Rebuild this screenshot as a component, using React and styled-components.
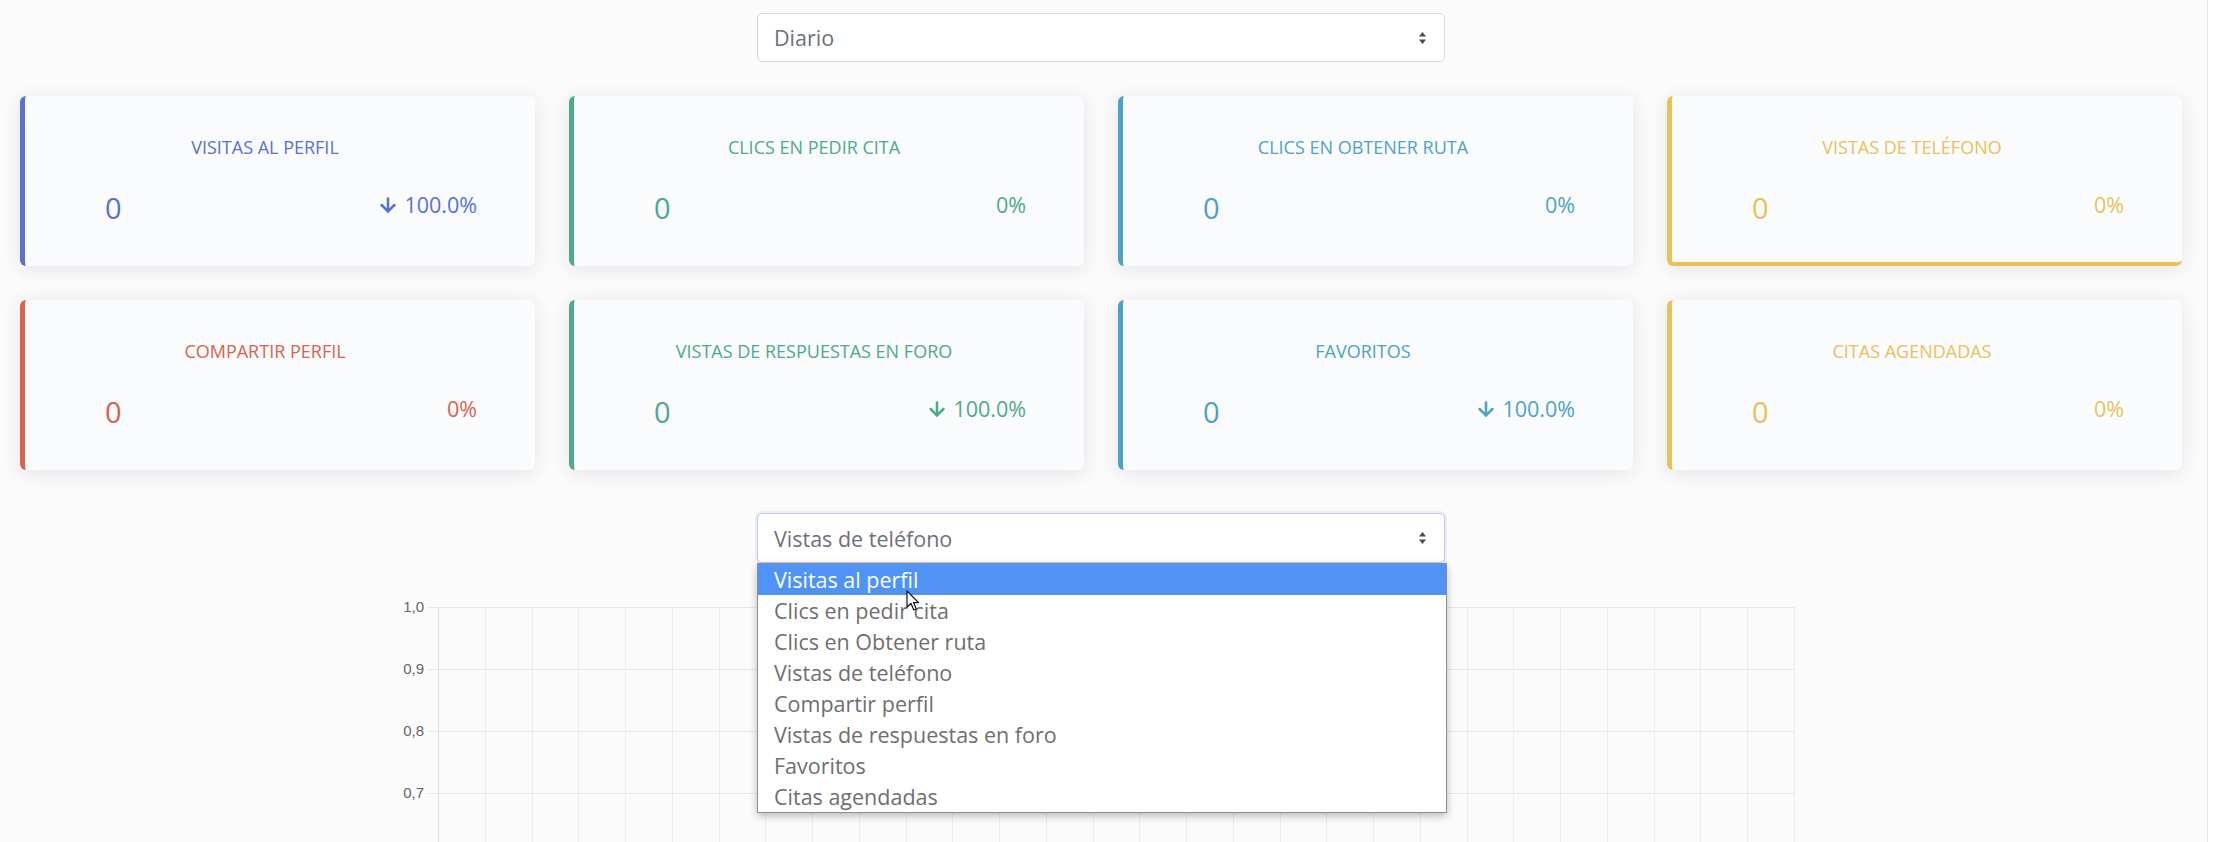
import React from "react";
import styled, { createGlobalStyle } from "styled-components";
import { ArrowDown } from "lucide-react";

const GlobalStyle = createGlobalStyle`
  html, body {
    margin: 0;
    padding: 0;
    background: #ffffff;
    font-family: "Open Sans", "Liberation Sans", sans-serif;
  }
`;

// colores de cada tarjeta
const colors = {
  primary: "#5872d2",
  success: "#4daa8a",
  info: "#4ba4c2",
  warning: "#e9c257",
  danger: "#d6644f",
};

const cards = [
  { title: "Visitas al perfil", value: 0, pct: "100.0%", down: true, color: "primary" },
  { title: "Clics en pedir cita", value: 0, pct: "0%", color: "success" },
  { title: "Clics en obtener ruta", value: 0, pct: "0%", color: "info" },
  { title: "Vistas de teléfono", value: 0, pct: "0%", color: "warning", active: true },
  { title: "Compartir perfil", value: 0, pct: "0%", color: "danger" },
  { title: "Vistas de respuestas en foro", value: 0, pct: "100.0%", down: true, color: "success" },
  { title: "Favoritos", value: 0, pct: "100.0%", down: true, color: "info" },
  { title: "Citas agendadas", value: 0, pct: "0%", color: "warning" },
];

const options = [
  "Visitas al perfil",
  "Clics en pedir cita",
  "Clics en Obtener ruta",
  "Vistas de teléfono",
  "Compartir perfil",
  "Vistas de respuestas en foro",
  "Favoritos",
  "Citas agendadas",
];

function SelectArrows() {
  return (
    <svg width="9" height="14" viewBox="0 0 9 14">
      <path d="M4.5 1 L8 5.5 L1 5.5 Z" fill="#4a4a4a" />
      <path d="M4.5 13 L8 8.5 L1 8.5 Z" fill="#4a4a4a" />
    </svg>
  );
}

function Cursor() {
  return (
    <svg width="14" height="22" viewBox="0 0 14 22">
      <path
        d="M1 1 L1 17 L5 13.5 L7.8 20 L10.3 19 L7.6 12.6 L12.6 12.6 Z"
        fill="#ffffff"
        stroke="#111"
        strokeWidth="1.2"
        strokeLinejoin="round"
      />
    </svg>
  );
}

function Chart() {
  const W = 1420;
  const H = 270;
  const left = 47;
  const right = 1403;
  const top = 17;
  const step = 62;
  const cols = 30;
  const labels = ["1,0", "0,9", "0,8", "0,7"];
  const vx = [];
  for (let i = 0; i < cols; i++) {
    vx.push(left + ((right - left) * i) / (cols - 1));
  }
  return (
    <svg width={W} height={H} viewBox={`0 0 ${W} ${H}`}>
      {labels.map((l, i) => (
        <g key={l}>
          <line
            x1={37}
            x2={right}
            y1={top + i * step + 0.5}
            y2={top + i * step + 0.5}
            stroke="#e6e6e6"
          />
          <text
            x={33}
            y={top + i * step + 5}
            textAnchor="end"
            fontSize="15"
            fill="#666"
            fontFamily="Liberation Sans, Arial, sans-serif"
          >
            {l}
          </text>
        </g>
      ))}
      {vx.map((x, i) => (
        <line
          key={i}
          x1={Math.round(x) + 0.5}
          x2={Math.round(x) + 0.5}
          y1={top}
          y2={H}
          stroke={i === 0 ? "#dcdcdc" : "#ececec"}
        />
      ))}
    </svg>
  );
}

function App() {
  return (
    <>
      <GlobalStyle />
      <Page>
        <Content>
          <TopSelect>
            <SelectText>Diario</SelectText>
            <SelectArrows />
          </TopSelect>

          <CardGrid>
            {cards.map((c) => (
              <Card key={c.title} color={colors[c.color]} active={c.active}>
                <CardTitle color={colors[c.color]}>{c.title}</CardTitle>
                <CardValues color={colors[c.color]}>
                  <Value>{c.value}</Value>
                  <Percent>
                    {c.down && <ArrowDown size={22} strokeWidth={2.8} />}
                    {c.pct}
                  </Percent>
                </CardValues>
              </Card>
            ))}
          </CardGrid>

          <MetricWrap>
            <MetricSelect>
              <SelectText>Vistas de teléfono</SelectText>
              <SelectArrows />
            </MetricSelect>
            <OptionList>
              {options.map((o, i) => (
                <Option key={o} selected={i === 0}>
                  {o}
                </Option>
              ))}
            </OptionList>
            <CursorWrap>
              <Cursor />
            </CursorWrap>
          </MetricWrap>

          <ChartWrap>
            <Chart />
          </ChartWrap>
        </Content>
      </Page>
    </>
  );
}

const Page = styled.div`
  width: 2208px;
  height: 842px;
  overflow: hidden;
  background: #fbfbfc;
  border-right: 1px solid #e4e4e6;
  box-sizing: border-box;
`;

const Content = styled.div`
  padding: 13px 25px 0 20px;
  display: flex;
  flex-direction: column;
  align-items: center;
`;

const TopSelect = styled.div`
  width: 688px;
  height: 49px;
  box-sizing: border-box;
  border: 1px solid #d6d8e0;
  border-radius: 5px;
  background: #fff;
  display: flex;
  align-items: center;
  justify-content: space-between;
  padding: 0 17px 0 16px;
`;

const SelectText = styled.span`
  font-size: 21.5px;
  color: #6e707e;
`;

const CardGrid = styled.div`
  margin-top: 34px;
  width: 100%;
  display: grid;
  grid-template-columns: repeat(4, 1fr);
  column-gap: 34px;
  row-gap: 34px;
`;

const Card = styled.div`
  height: 170px;
  box-sizing: border-box;
  background: #fafbfd;
  border-radius: 6px;
  border-left: 5px solid ${(p) => p.color};
  border-bottom: ${(p) => (p.active ? `4px solid ${p.color}` : "none")};
  box-shadow: 0 3px 20px rgba(40, 40, 60, 0.11);
  display: flex;
  flex-direction: column;
`;

const CardTitle = styled.div`
  margin-top: 38px;
  padding-right: 30px;
  text-align: center;
  text-transform: uppercase;
  font-size: 18px;
  line-height: 26px;
  color: ${(p) => p.color};
`;

const CardValues = styled.div`
  margin-top: 30px;
  display: flex;
  justify-content: space-between;
  align-items: center;
  padding: 0 58px 0 80px;
  color: ${(p) => p.color};
`;

const Value = styled.span`
  font-size: 29px;
  line-height: 36px;
`;

const Percent = styled.span`
  display: flex;
  align-items: center;
  gap: 5px;
  font-size: 21.5px;
  margin-top: -7px;
`;

const MetricWrap = styled.div`
  position: relative;
  margin-top: 43px;
`;

const MetricSelect = styled(TopSelect)`
  height: 50px;
  border-color: #bfc9ee;
  box-shadow: 0 0 0 2px rgba(120, 140, 220, 0.12);
`;

const OptionList = styled.div`
  position: absolute;
  top: 50px;
  left: 0;
  width: 690px;
  box-sizing: border-box;
  border: 1px solid #8f8f8f;
  background: #fff;
  box-shadow: 0 3px 8px rgba(0, 0, 0, 0.25);
  z-index: 2;
`;

const Option = styled.div`
  height: 31px;
  line-height: 31px;
  padding-left: 16px;
  font-size: 21.5px;
  color: ${(p) => (p.selected ? "#fff" : "#6f6f6f")};
  background: ${(p) => (p.selected ? "#4f93f4" : "transparent")};
`;

const CursorWrap = styled.div`
  position: absolute;
  left: 149px;
  top: 77px;
  z-index: 3;
`;

const ChartWrap = styled.div`
  margin-top: 27px;
  display: flex;
  justify-content: center;
`;

export default App;
